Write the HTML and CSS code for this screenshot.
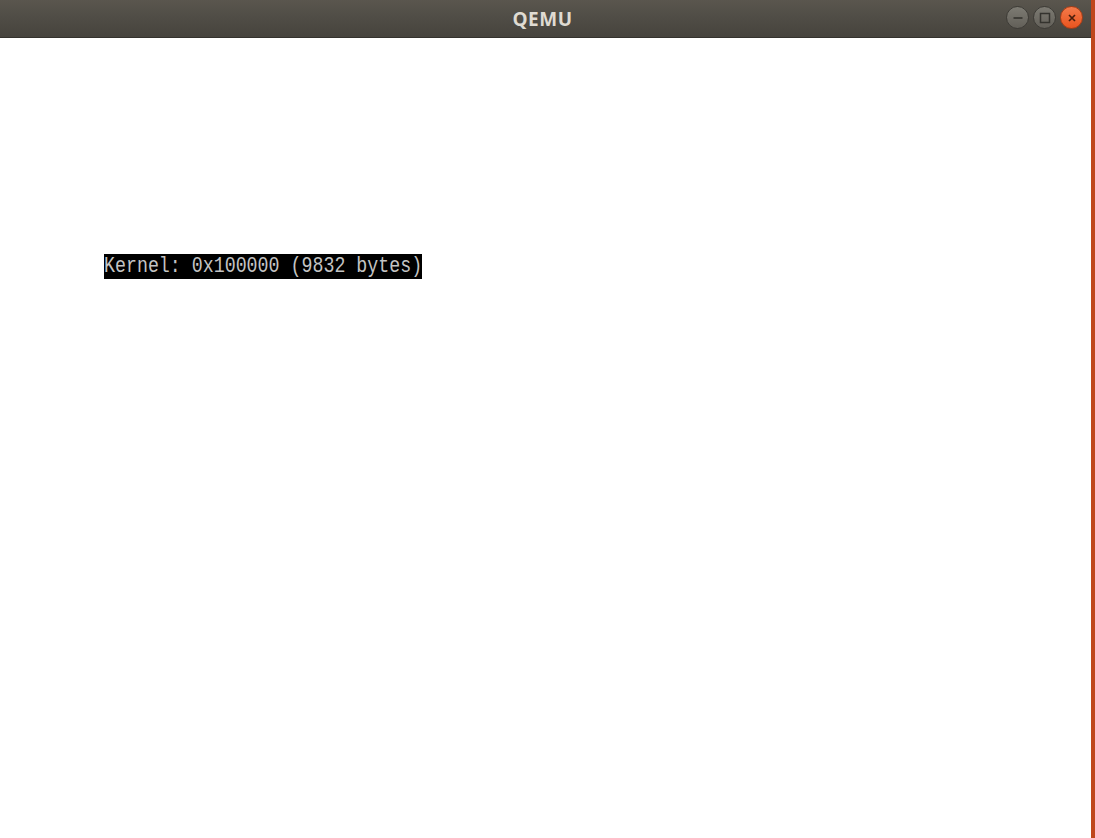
FILE: index.html
```html
<!DOCTYPE html>
<html lang="en">

<head>
  <meta charset="UTF-8">
  <title>QEMU</title>
  <link rel="stylesheet" href="styles.css">
</head>

<body>
  <div class="window">
    <div class="titlebar">
      <span class="title">QEMU</span>
      <div class="buttons">
        <span class="btn btn-min">
          <svg width="14" height="14" viewBox="0 0 14 14"><path d="M2.5 7h9" stroke="#34332e" stroke-width="1.6"/></svg>
        </span>
        <span class="btn btn-max">
          <svg width="14" height="14" viewBox="0 0 14 14"><rect x="2.5" y="2.5" width="9" height="9" fill="none" stroke="#34332e" stroke-width="1.5"/></svg>
        </span>
        <span class="btn btn-close">
          <svg width="14" height="14" viewBox="0 0 14 14"><path d="M4 4l6 6M10 4l-6 6" stroke="#4a1e0c" stroke-width="1.7"/></svg>
        </span>
      </div>
    </div>
    <div class="screen">
      <div class="line"><span class="text">Kernel: 0x100000 (9832 bytes)</span></div>
    </div>
  </div>
</body>

</html>
```

FILE: styles.css
```css
html, body {
  margin: 0;
  padding: 0;
  height: 100%;
  background: #fff;
}

.window {
  display: flex;
  flex-direction: column;
  height: 838px;
  width: 1095px;
  box-sizing: border-box;
  border-right: 4px solid #bf461c;
}

/* title bar */
.titlebar {
  position: relative;
  height: 38px;
  box-sizing: border-box;
  background: linear-gradient(#5a564e, #514e47 40%, #46433d);
  border-bottom: 1px solid #34322d;
  display: flex;
  align-items: center;
  justify-content: center;
}

.title {
  font-family: "Open Sans", "DejaVu Sans", sans-serif;
  font-weight: bold;
  font-size: 19px;
  color: #dfdbd2;
  letter-spacing: 0.5px;
  margin-left: -6px;
}

.buttons {
  position: absolute;
  right: 8px;
  top: 6px;
  display: flex;
  gap: 4px;
}

.btn {
  width: 23px;
  height: 23px;
  border-radius: 50%;
  box-sizing: border-box;
  display: flex;
  align-items: center;
  justify-content: center;
  background: linear-gradient(#7d7b73, #625f58);
  border: 1px solid #3d3b36;
}

.btn-close {
  background: linear-gradient(#f47a4a, #e9541f);
  border-color: #a83d16;
}

/* qemu screen */
.screen {
  flex: 1;
  background: #fff;
  padding: 216px 0 0 104px;
}

.line {
  display: inline-block;
  background: #000;
  height: 25px;
  width: 318px;
  overflow: hidden;
}

.text {
  display: inline-block;
  color: #c4c4c4;
  font-family: "Liberation Mono", "DejaVu Sans Mono", monospace;
  font-size: 18.3px;
  line-height: 20px;
  margin-top: 2px;
  transform: scaleY(1.2);
  transform-origin: center;
  white-space: pre;
}
```
